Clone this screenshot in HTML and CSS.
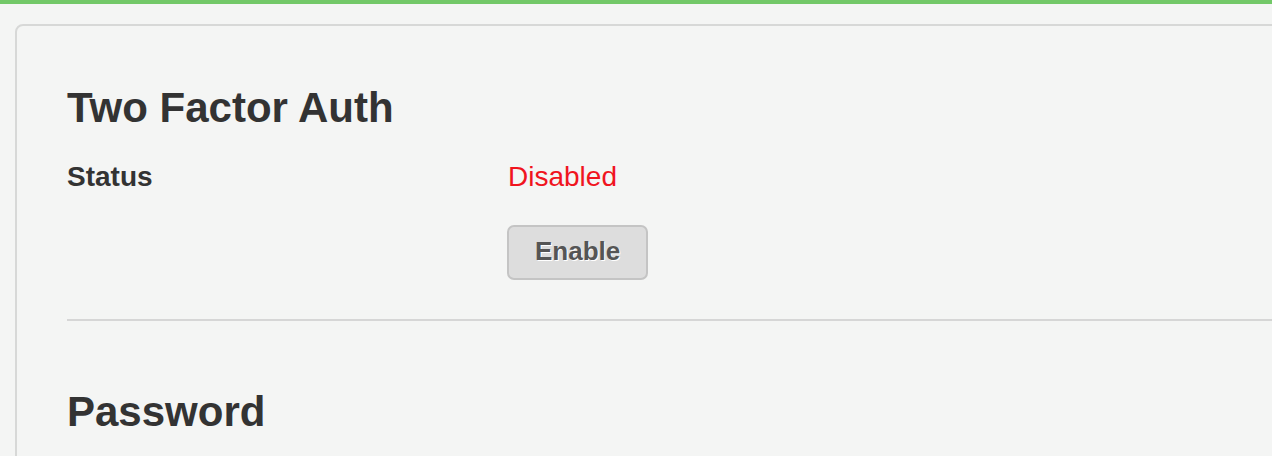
FILE: index.html
```html
<!DOCTYPE html>
<html>
<head>
<meta charset="utf-8">
<link rel="stylesheet" href="styles.css">
</head>
<body>
<div class="page">
  <div class="card">
    <section class="section">
      <h2 class="section-title">Two Factor Auth</h2>
      <div class="field-row">
        <div class="field-label">Status</div>
        <div class="field-value">
          <div class="status-disabled">Disabled</div>
          <button class="btn">Enable</button>
        </div>
      </div>
    </section>
    <hr class="divider">
    <section class="section">
      <h2 class="section-title">Password</h2>
    </section>
  </div>
</div>
</body>
</html>
```

FILE: styles.css
```css
html, body {
  margin: 0;
  padding: 0;
}
body {
  background: #f4f5f4;
  border-top: 4px solid #72c868;
  font-family: "Liberation Sans", Arial, Helvetica, sans-serif;
  color: #333333;
  overflow: hidden;
  height: 452px;
}
.page {
  padding: 20px 0 0 15px;
}
.card {
  border: 2px solid #d7d8d7;
  border-radius: 8px;
  padding: 58px 50px 40px;
  margin-right: -40px;
}
.section-title {
  margin: 0;
  font-size: 42px;
  line-height: 48px;
  font-weight: bold;
  color: #333333;
}
.field-row {
  display: flex;
  margin-top: 25px;
}
.field-label {
  width: 441px;
  flex: none;
  font-size: 28px;
  line-height: 40px;
  font-weight: bold;
}
.field-value {
  display: flex;
  flex-direction: column;
  align-items: flex-start;
  gap: 28px;
}
.status-disabled {
  font-size: 28px;
  line-height: 40px;
  color: #f0141e;
}
.btn {
  font-family: "Liberation Sans", Arial, Helvetica, sans-serif;
  font-size: 26px;
  line-height: 31px;
  font-weight: bold;
  color: #555555;
  text-shadow: 1px 1px 0 #ffffff;
  background: #dddddd;
  border: 2px solid #c4c4c4;
  border-radius: 7px;
  padding: 9px 27px 11px 26px;
  width: 141px;
  margin: 0 0 0 -1px;
  cursor: pointer;
}
.divider {
  border: 0;
  height: 2px;
  background: #d6d6d6;
  margin: 39px -50px 67px 0;
}
```
